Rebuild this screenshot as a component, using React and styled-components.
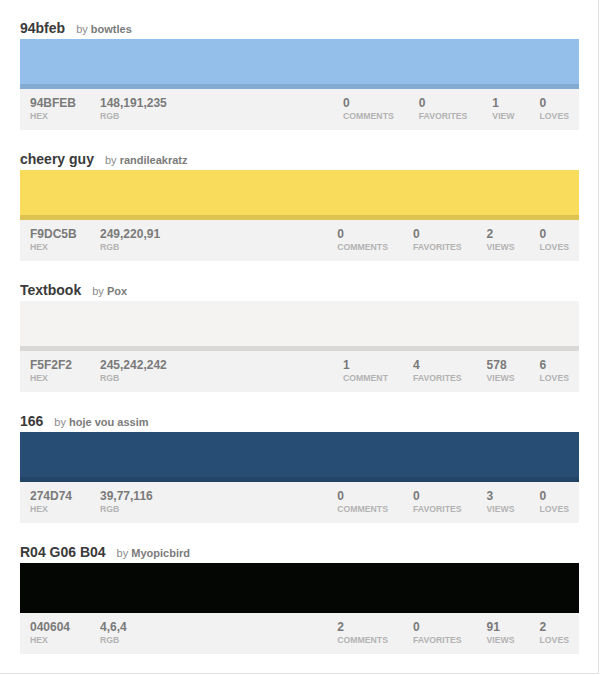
import React from 'react';
import styled, { createGlobalStyle } from 'styled-components';

const palettes = [
    { title: '94bfeb', user: 'bowtles', hex: '94BFEB', rgb: '148,191,235', comments: 0, favorites: 0, views: 1, loves: 0 },
    { title: 'cheery guy', user: 'randileakratz', hex: 'F9DC5B', rgb: '249,220,91', comments: 0, favorites: 0, views: 2, loves: 0 },
    { title: 'Textbook', user: 'Pox', hex: 'F5F2F2', rgb: '245,242,242', comments: 1, favorites: 4, views: 578, loves: 6 },
    { title: '166', user: 'hoje vou assim', hex: '274D74', rgb: '39,77,116', comments: 0, favorites: 0, views: 3, loves: 0 },
    { title: 'R04 G06 B04', user: 'Myopicbird', hex: '040604', rgb: '4,6,4', comments: 2, favorites: 0, views: 91, loves: 2 },
];

const plural = (n, word) => (n === 1 ? word : word + 'S');

const ColorCard = ({ item }) => (
    <Card>
        <TitleRow>
            <Title>{item.title}</Title>
            <ByLine>by <strong>{item.user}</strong></ByLine>
        </TitleRow>
        <Swatch color={'#' + item.hex} />
        <Stats>
            <Stat $wide>
                <Value>{item.hex}</Value>
                <Label>Hex</Label>
            </Stat>
            <Stat>
                <Value>{item.rgb}</Value>
                <Label>RGB</Label>
            </Stat>
            <Counts>
                <Stat>
                    <Value>{item.comments}</Value>
                    <Label>{plural(item.comments, 'COMMENT')}</Label>
                </Stat>
                <Stat>
                    <Value>{item.favorites}</Value>
                    <Label>{plural(item.favorites, 'FAVORITE')}</Label>
                </Stat>
                <Stat>
                    <Value>{item.views}</Value>
                    <Label>{plural(item.views, 'VIEW')}</Label>
                </Stat>
                <Stat>
                    <Value>{item.loves}</Value>
                    <Label>{plural(item.loves, 'LOVE')}</Label>
                </Stat>
            </Counts>
        </Stats>
    </Card>
);

const App = () => (
    <>
        <GlobalStyle />
        <Page>
            {palettes.map(p => <ColorCard key={p.hex} item={p} />)}
        </Page>
    </>
);

export default App;

const GlobalStyle = createGlobalStyle`
    body {
        margin: 0;
        background: #fff;
        font-family: "Liberation Sans", Arial, Helvetica, sans-serif;
    }
`;

const Page = styled.div`
    width: 599px;
    box-sizing: border-box;
    padding: 20px 19px 19px 20px;
    border-right: 1px solid #e2e2e2;
    border-bottom: 1px solid #e2e2e2;
    display: flex;
    flex-direction: column;
    gap: 21px;
`;

const Card = styled.div`
    display: flex;
    flex-direction: column;
`;

const TitleRow = styled.div`
    display: flex;
    align-items: baseline;
    gap: 11px;
    height: 16px;
    margin-bottom: 3px;
`;

const Title = styled.span`
    font-size: 14px;
    line-height: 16px;
    font-weight: bold;
    color: #3a3a3a;
`;

const ByLine = styled.span`
    font-size: 11px;
    line-height: 16px;
    color: #8a8a8a;

    strong {
        color: #7a7a7a;
    }
`;

const Swatch = styled.div`
    height: 45px;
    background-color: ${p => p.color};
    border-bottom: 5px solid rgba(0, 0, 0, 0.11);
`;

const Stats = styled.div`
    height: 41px;
    box-sizing: border-box;
    padding: 7px 10px 0 10px;
    background: #f2f2f2;
    display: flex;
    align-items: flex-start;
`;

const Counts = styled.div`
    margin-left: auto;
    display: flex;
    gap: 25px;
`;

const Stat = styled.div`
    display: flex;
    flex-direction: column;
    width: ${p => (p.$wide ? '70px' : 'auto')};
`;

const Value = styled.span`
    font-size: 12px;
    line-height: 14px;
    font-weight: bold;
    color: #7a7a7a;
`;

const Label = styled.span`
    margin-top: 1px;
    font-size: 8.7px;
    line-height: 10px;
    font-weight: bold;
    text-transform: uppercase;
    color: #b2b2b2;
`;
